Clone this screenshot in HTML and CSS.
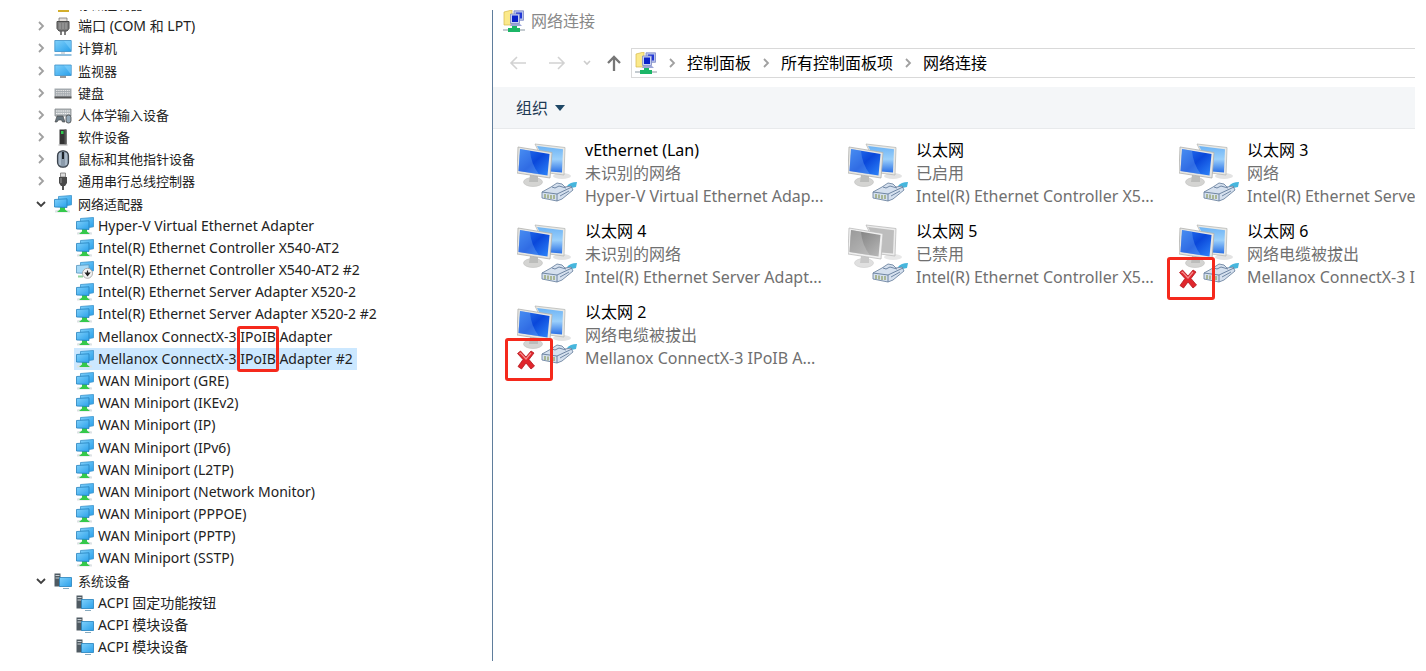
FILE: index.html
```html
<!DOCTYPE html>
<html lang="zh-CN">
<head>
    <meta charset="UTF-8">
    <meta name="viewport" content="width=device-width, initial-scale=1.0">
    <title>网络连接</title>
    <link rel="stylesheet" href="styles.css">
</head>
<body>
    <!-- Shared icons -->
    <svg class="sprite" aria-hidden="true">
        <defs>
            <linearGradient id="sky" x1="0" y1="0" x2="1" y2="1">
                <stop offset="0" stop-color="#7fd0fb"/>
                <stop offset="1" stop-color="#2aa0ea"/>
            </linearGradient>
            <linearGradient id="screen" x1="0" y1="0" x2="1" y2="1">
                <stop offset="0" stop-color="#2f7bf0"/>
                <stop offset="0.5" stop-color="#0a47da"/>
                <stop offset="1" stop-color="#2f86fa"/>
            </linearGradient>
            <linearGradient id="screen-back" x1="0" y1="0" x2="0" y2="1">
                <stop offset="0" stop-color="#6db3f4"/>
                <stop offset="0.5" stop-color="#9bd0fb"/>
                <stop offset="1" stop-color="#2a70e6"/>
            </linearGradient>
            <linearGradient id="gray-screen" x1="0" y1="0" x2="1" y2="1">
                <stop offset="0" stop-color="#777"/>
                <stop offset="1" stop-color="#b9b9b9"/>
            </linearGradient>
        </defs>
        <symbol id="right" viewBox="0 0 10 12"><path d="M3 2l4 4-4 4" fill="none" stroke="#a0a0a0" stroke-width="1.8"/></symbol>
        <symbol id="down" viewBox="0 0 10 12"><path d="M1 4l4 4 4-4" fill="none" stroke="#404040" stroke-width="1.8"/></symbol>
        <symbol id="net" viewBox="0 0 18 18">
            <path d="M1 15.5q7-2 15 0v2H1z" fill="#dde2e5"/>
            <path d="M6 12h5v2.500l3 2.500H3l3-2.500z" fill="#35c94b"/>
            <path d="M4.500 1.500l13-1v9.300l-4 .6h-9z" fill="url(#sky)" stroke="#3b93cb" stroke-width=".8"/>
            <path d="M.5 4.500l12.500-.7v8.700l-12.500-.5z" fill="url(#sky)" stroke="#2581bd" stroke-width=".8"/>
        </symbol>
        <symbol id="net-off" viewBox="0 0 18 18">
            <path d="M4.500 1.500l13-1v9.300l-4 .6h-9z" fill="url(#sky)" stroke="#3b93cb" stroke-width=".8"/>
            <path d="M.5 4.500l12.500-.7v8.700l-12.500-.5z" fill="#a6daf8" stroke="#5795bd" stroke-width=".8"/>
            <path d="M2 15.500h5" stroke="#8fd49a" stroke-width="2"/>
            <circle cx="11.500" cy="12.300" r="5" fill="#f3f3f3" stroke="#9b9b9b" stroke-width=".8"/>
            <path d="M11.500 9.500v3M9.500 12l2 2.500 2-2.500z" stroke="#222" stroke-width="1.200" fill="#222"/>
        </symbol>
        <symbol id="port" viewBox="0 0 18 18">
            <path d="M5 1h8v4H5z" fill="#e4e0dc" stroke="#777" stroke-width=".8"/>
            <path d="M3 4.500h12v7l-2 2.500H5l-2-2.500z" fill="#7d7d7d" stroke="#4b4b4b"/>
            <path d="M6 6v6M9 6v6M12 6v6" stroke="#a5a5a5"/>
            <path d="M7 14v4M11 14v4" stroke="#555" stroke-width="1.500"/>
        </symbol>
        <symbol id="computer" viewBox="0 0 18 18">
            <path d="M.8 1.500h16.400v11H.8z" fill="url(#sky)" stroke="#3c8fc7" stroke-width=".8"/>
            <path d="M10 2l7 9V2z" fill="#8ed7ff" opacity=".5"/>
            <path d="M7 13h4v2H7z" fill="#d5dade"/>
            <path d="M.5 16h17" stroke="#6eacd6" stroke-width="1.500"/>
        </symbol>
        <symbol id="monitor" viewBox="0 0 18 18">
            <path d="M.8 3h16.400v10.500H.8z" fill="url(#sky)" stroke="#3c8fc7" stroke-width=".8"/>
            <path d="M10 3.500l7 9v-9z" fill="#8ed7ff" opacity=".5"/>
            <path d="M6 15h6" stroke="#777" stroke-width="1.500"/>
        </symbol>
        <symbol id="keyboard" viewBox="0 0 18 18">
            <path d="M.5 4.500h17v9H.5z" fill="#a4aaaf"/>
            <path d="M.5 13.500h17" stroke="#555" stroke-width="2"/>
            <path d="M2 6.500h14M2 8.700h14M2 11h14" stroke="#e2e2e2" stroke-dasharray="1.500 .7"/>
        </symbol>
        <symbol id="hid" viewBox="0 0 18 18">
            <path d="M1 3h16v7H1z" fill="#b4babd" stroke="#858b8e" stroke-width=".8"/>
            <path d="M2 5h14M2 7.500h14" stroke="#f2f2f2" stroke-dasharray="1.500 .7"/>
            <path d="M1 16l2-6h6l2 6H8.500L7.500 14h-3L3 16z" fill="#66747d" stroke="#444" stroke-width=".6"/>
            <rect x="12" y="9" width="5" height="8" rx="2.300" fill="#95a9b8" stroke="#444" stroke-width=".8"/>
        </symbol>
        <symbol id="software" viewBox="0 0 18 18">
            <path d="M5.500 1.500h7v15h-7z" fill="#343434"/>
            <path d="M10.500 1.500h2v15h-2z" fill="#565656"/>
            <path d="M7 3h2.500v3H7z" fill="#30c94e"/>
            <path d="M4.500 17h9" stroke="#aaa"/>
        </symbol>
        <symbol id="mouse" viewBox="0 0 18 18">
            <rect x="3.500" y=".8" width="11" height="16.400" rx="5" fill="#8b9bab" stroke="#3c444d" stroke-width="1.200"/>
            <path d="M6 3v12M12 3v12" stroke="#bbc9d6" stroke-width="1.300"/>
            <path d="M9 2v7" stroke="#1d242b" stroke-width="2"/>
        </symbol>
        <symbol id="usb" viewBox="0 0 18 18">
            <path d="M6.500 1h5v4h-5z" fill="#ddd" stroke="#777" stroke-width=".8"/>
            <path d="M5 5h8v6l-2 3H7l-2-3z" fill="#4a4a4a"/>
            <path d="M7 6v5" stroke="#999"/>
            <path d="M9 14v4" stroke="#555" stroke-width="2"/>
        </symbol>
        <symbol id="system" viewBox="0 0 18 18">
            <path d="M.5 1.500h6v13h-6z" fill="#4f5a62"/>
            <path d="M1.500 3.500h4M1.500 6h4" stroke="#c9d0d4"/>
            <path d="M5.500 5.500h12v9h-12z" fill="url(#sky)" stroke="#2581bd" stroke-width=".8"/>
            <path d="M9 16.500h6" stroke="#86aabf"/>
        </symbol>
        <symbol id="card" viewBox="0 0 18 18">
            <path d="M2 7h14v6H2z" fill="#d8b43a"/>
            <path d="M1 12h16v3H1z" fill="#2a9440"/>
            <path d="M4 14h11v3H4z" fill="#d3ae2c"/>
        </symbol>
        <symbol id="folder-net" viewBox="0 0 22 22">
            <path d="M1 2l8-2v15H1z" fill="#fbe98a" stroke="#d5b94b" stroke-width=".7"/>
            <path d="M11 .8h9.500v9.500H11z" fill="#b9c4ec" stroke="#7c88c4" stroke-width=".8"/>
            <path d="M13 2.500h6v6h-6z" fill="#2338d6"/>
            <path d="M7.500 4h9v9.500h-9z" fill="#c7d0f0" stroke="#7c88c4" stroke-width=".8"/>
            <path d="M9 5.500h6v6.500H9z" fill="#0a22c9"/>
            <path d="M8 14h9l2 2H7z" fill="#9ca6d8"/>
            <path d="M0 19h22v2H0z" fill="#c4cbd0"/>
            <path d="M9 16h5v2h3v4H5v-4h4z" fill="#1cb667"/>
        </symbol>
        <symbol id="plug" viewBox="0 0 60 60">
            <path d="M50 43q3-4 10-4l-1 5q-4 0-7 3z" fill="#46b6dd"/>
            <path d="M25 49l9-5 6-4 5 1 3 3 6-1 2 4-11 9-5 2-15-3z" fill="#d5e0ee" stroke="#7187a3" stroke-width=".9"/>
            <path d="M25 49l15 2v7M40 51l15-7M35 44l3 1 4-2 7 2M43 53l9-5" fill="none" stroke="#637c9b" stroke-width=".9"/>
            <path d="M28 51v4M31 51.500v4M34 52v4M37 52v4" stroke="#91a068" stroke-width="1.300"/>
        </symbol>
        <symbol id="lan" viewBox="0 0 60 60">
            <ellipse cx="45" cy="33" rx="9" ry="3" fill="#e3e3e3"/>
            <path d="M18 1l30 3.500L47 32l-15-2z" fill="#e8e9e6" stroke="#b9bab7" stroke-width=".8"/>
            <path d="M20 3l26 3.200-1 23.300-12-1z" fill="url(#screen-back)"/>
            <ellipse cx="16" cy="39" rx="9.500" ry="4.500" fill="#d4d4d2" stroke="#c0c0be" stroke-width=".6"/>
            <path d="M13 32l8 1v6h-9z" fill="#bcbdbb"/>
            <path d="M1 4l34 5.500L33 35 0 30z" fill="#e6e6e3" stroke="#b0b0ad" stroke-width=".8"/>
            <path d="M3 6l29.500 5-2 21.500-29-4.500z" fill="url(#screen)"/>
            <path d="M3 6l10 1.700Q14 21 22 31.300L1.500 28z" fill="#79b3f5" opacity=".35"/>
            <use href="#plug"/>
        </symbol>
        <symbol id="lan-gray" viewBox="0 0 60 60">
            <ellipse cx="45" cy="33" rx="9" ry="3" fill="#e8e8e8"/>
            <path d="M18 1l30 3.500L47 32l-15-2z" fill="#ececec" stroke="#bbb" stroke-width=".8"/>
            <path d="M20 3l26 3.200-1 23.300-12-1z" fill="#bdbdbd"/>
            <ellipse cx="16" cy="39" rx="9.500" ry="4.500" fill="#e0e0e0" stroke="#ccc" stroke-width=".6"/>
            <path d="M13 32l8 1v6h-9z" fill="#c8c8c8"/>
            <path d="M1 4l34 5.500L33 35 0 30z" fill="#f0f0f0" stroke="#bbb" stroke-width=".8"/>
            <path d="M3 6l29.500 5-2 21.500-29-4.500z" fill="url(#gray-screen)"/>
            <path d="M3 6l10 1.700Q14 21 22 31.300L1.500 28z" fill="#ccc" opacity=".4"/>
            <use href="#plug"/>
        </symbol>
        <symbol id="cross" viewBox="0 0 20 20">
            <path d="M1.500 3.500L4.500 1 10 7l5-6 3 2-5 6.500 5.500 6.500-3.500 3-5-6-4.500 6L2 16.500 7 9.500z" fill="#e0262c" stroke="#b3181e" stroke-width=".8"/>
            <path d="M3.500 3.800l1-.8 5.500 6 5-6" fill="none" stroke="#f58c8e" stroke-width="1.200"/>
        </symbol>
    </svg>

    <div class="container">
        <!-- Device tree -->
        <nav class="devices">
            <ul class="tree">
                <li><svg class="arrow"><use href="#right"/></svg><svg class="icon"><use href="#card"/></svg>存储控制器</li>
                <li class="latin"><svg class="arrow"><use href="#right"/></svg><svg class="icon"><use href="#port"/></svg>端口 (COM 和 LPT)</li>
                <li><svg class="arrow"><use href="#right"/></svg><svg class="icon"><use href="#computer"/></svg>计算机</li>
                <li><svg class="arrow"><use href="#right"/></svg><svg class="icon"><use href="#monitor"/></svg>监视器</li>
                <li><svg class="arrow"><use href="#right"/></svg><svg class="icon"><use href="#keyboard"/></svg>键盘</li>
                <li><svg class="arrow"><use href="#right"/></svg><svg class="icon"><use href="#hid"/></svg>人体学输入设备</li>
                <li><svg class="arrow"><use href="#right"/></svg><svg class="icon"><use href="#software"/></svg>软件设备</li>
                <li><svg class="arrow"><use href="#right"/></svg><svg class="icon"><use href="#mouse"/></svg>鼠标和其他指针设备</li>
                <li><svg class="arrow"><use href="#right"/></svg><svg class="icon"><use href="#usb"/></svg>通用串行总线控制器</li>
                <li><svg class="arrow"><use href="#down"/></svg><svg class="icon"><use href="#net"/></svg>网络适配器</li>
                <li class="child"><svg class="icon"><use href="#net"/></svg><span>Hyper-V Virtual Ethernet Adapter</span></li>
                <li class="child"><svg class="icon"><use href="#net"/></svg><span>Intel(R) Ethernet Controller X540-AT2</span></li>
                <li class="child"><svg class="icon"><use href="#net-off"/></svg><span>Intel(R) Ethernet Controller X540-AT2 #2</span></li>
                <li class="child"><svg class="icon"><use href="#net"/></svg><span>Intel(R) Ethernet Server Adapter X520-2</span></li>
                <li class="child"><svg class="icon"><use href="#net"/></svg><span>Intel(R) Ethernet Server Adapter X520-2 #2</span></li>
                <li class="child"><svg class="icon"><use href="#net"/></svg><span>Mellanox ConnectX-3 <b class="marked">IPoIB</b> Adapter</span></li>
                <li class="child selected"><svg class="icon"><use href="#net"/></svg><span>Mellanox ConnectX-3 IPoIB Adapter #2</span></li>
                <li class="child"><svg class="icon"><use href="#net"/></svg><span>WAN Miniport (GRE)</span></li>
                <li class="child"><svg class="icon"><use href="#net"/></svg><span>WAN Miniport (IKEv2)</span></li>
                <li class="child"><svg class="icon"><use href="#net"/></svg><span>WAN Miniport (IP)</span></li>
                <li class="child"><svg class="icon"><use href="#net"/></svg><span>WAN Miniport (IPv6)</span></li>
                <li class="child"><svg class="icon"><use href="#net"/></svg><span>WAN Miniport (L2TP)</span></li>
                <li class="child"><svg class="icon"><use href="#net"/></svg><span>WAN Miniport (Network Monitor)</span></li>
                <li class="child"><svg class="icon"><use href="#net"/></svg><span>WAN Miniport (PPPOE)</span></li>
                <li class="child"><svg class="icon"><use href="#net"/></svg><span>WAN Miniport (PPTP)</span></li>
                <li class="child"><svg class="icon"><use href="#net"/></svg><span>WAN Miniport (SSTP)</span></li>
                <li><svg class="arrow"><use href="#down"/></svg><svg class="icon"><use href="#system"/></svg>系统设备</li>
                <li class="child"><svg class="icon"><use href="#system"/></svg><span>ACPI 固定功能按钮</span></li>
                <li class="child"><svg class="icon"><use href="#system"/></svg><span>ACPI 模块设备</span></li>
                <li class="child"><svg class="icon"><use href="#system"/></svg><span>ACPI 模块设备</span></li>
            </ul>
        </nav>

        <!-- Network connections window -->
        <main class="window">
            <header class="title"><svg class="folder"><use href="#folder-net"/></svg>网络连接</header>

            <div class="nav">
                <button aria-label="后退"><svg class="nav-icon" viewBox="0 0 18 18"><path d="M17 9H2M8 3L2 9l6 6" stroke="#d2d2d2"/></svg></button>
                <button aria-label="前进"><svg class="nav-icon" viewBox="0 0 18 18"><path d="M1 9h15M10 3l6 6-6 6" stroke="#d2d2d2"/></svg></button>
                <button aria-label="历史" class="recent"><svg class="nav-icon" viewBox="0 0 18 18"><path d="M6 7l3 3 3-3" stroke="#ccc"/></svg></button>
                <button aria-label="上移" class="up"><svg class="nav-icon" viewBox="0 0 18 18"><path d="M9 17V3M3 9l6-6 6 6" stroke="#777" stroke-width="2.300"/></svg></button>
                <div class="address">
                    <svg class="folder"><use href="#folder-net"/></svg>
                    <svg class="sep"><use href="#right"/></svg><a href="#">控制面板</a>
                    <svg class="sep"><use href="#right"/></svg><a href="#">所有控制面板项</a>
                    <svg class="sep"><use href="#right"/></svg><a href="#">网络连接</a>
                </div>
            </div>

            <div class="toolbar">
                <button class="organize">组织 <svg class="caret" viewBox="0 0 10 6"><path d="M0 0h10L5 6z" fill="#1e4766"/></svg></button>
            </div>

            <div class="connections">
                <div class="item">
                    <svg class="lan"><use href="#lan"/></svg>
                    <div class="info"><h2>vEthernet (Lan)</h2><p>未识别的网络</p><p>Hyper-V Virtual Ethernet Adap...</p></div>
                </div>
                <div class="item">
                    <svg class="lan"><use href="#lan"/></svg>
                    <div class="info"><h2>以太网</h2><p>已启用</p><p>Intel(R) Ethernet Controller X5...</p></div>
                </div>
                <div class="item">
                    <svg class="lan"><use href="#lan"/></svg>
                    <div class="info"><h2>以太网 3</h2><p>网络</p><p>Intel(R) Ethernet Server Adapt...</p></div>
                </div>
                <div class="item">
                    <svg class="lan"><use href="#lan"/></svg>
                    <div class="info"><h2>以太网 4</h2><p>未识别的网络</p><p>Intel(R) Ethernet Server Adapt...</p></div>
                </div>
                <div class="item">
                    <svg class="lan"><use href="#lan-gray"/></svg>
                    <div class="info"><h2>以太网 5</h2><p>已禁用</p><p>Intel(R) Ethernet Controller X5...</p></div>
                </div>
                <div class="item">
                    <svg class="lan"><use href="#lan"/></svg>
                    <div class="badge"><svg class="cross"><use href="#cross"/></svg></div>
                    <div class="info"><h2>以太网 6</h2><p>网络电缆被拔出</p><p>Mellanox ConnectX-3 IPoIB A...</p></div>
                </div>
                <div class="item">
                    <svg class="lan"><use href="#lan"/></svg>
                    <div class="badge"><svg class="cross"><use href="#cross"/></svg></div>
                    <div class="info"><h2>以太网 2</h2><p>网络电缆被拔出</p><p>Mellanox ConnectX-3 IPoIB A...</p></div>
                </div>
            </div>
        </main>
    </div>
</body>
</html>
```
FILE: styles.css
```css
* {
    margin: 0;
    padding: 0;
    box-sizing: border-box;
}

body {
    font-family: 'Noto Sans', 'Noto Sans CJK SC', sans-serif;
    background-color: #fff;
    color: #222;
    min-height: 100vh;
    display: flex;
    padding: 10px 11px 10px 0;
}

svg {
    display: block;
    flex: none;
}

.sprite {
    position: absolute;
    width: 0;
    height: 0;
}

.container {
    flex: 1;
    min-width: 0;
    display: grid;
    grid-template-columns: 492px minmax(0, 1fr);
    overflow: hidden;
}

/* Device tree */
.devices {
    display: flex;
}

.tree {
    flex: 1;
    display: flex;
    flex-direction: column;
    list-style: none;
    margin: -17px 0 3px;
    padding-left: 36px;
    font-size: 13px;
    line-height: 20px;
}

.tree li {
    flex: 1 0 20px;
    display: flex;
    align-items: center;
    white-space: nowrap;
}

.arrow {
    width: 10px;
    height: 12px;
    margin-right: 8px;
}

.icon {
    width: 18px;
    height: 18px;
    margin-right: 6px;
}

.tree .latin {
    font-size: 14px;
}

.tree .child {
    align-self: flex-start;
    padding: 0 4px 0 2px;
    margin-left: 38px;
    font-size: 14px;
}

.child .icon {
    margin-right: 4px;
}

.tree .selected {
    background-color: #cce8ff;
}

.marked {
    position: relative;
    font-weight: normal;
}

.marked::after {
    content: '';
    box-sizing: border-box;
    position: absolute;
    left: -3px;
    right: -3px;
    top: -1px;
    height: 46px;
    border: 3px solid #f5291c;
    border-radius: 3px;
}

/* Window */
.window {
    border-left: 1px solid #5f7d9c;
    font-size: 16px;
    line-height: 24px;
    overflow: hidden;
}

.title {
    display: flex;
    align-items: center;
    gap: 6px;
    height: 22px;
    padding-left: 10px;
    color: #888;
}

.folder {
    width: 22px;
    height: 22px;
}

.nav {
    display: flex;
    align-items: center;
    margin: 16px 0 9px;
    padding-left: 16px;
}

button {
    font: inherit;
    background: none;
    border: none;
    cursor: pointer;
}

.nav button {
    margin-right: 21px;
}

.nav .recent {
    margin: 0 9px 0 -9px;
}

.nav .up {
    margin-right: 8px;
}

.nav-icon {
    width: 18px;
    height: 18px;
    fill: none;
    stroke-width: 1.6;
}

.address {
    flex: 1;
    display: flex;
    align-items: center;
    height: 30px;
    padding-left: 3px;
    border: 1px solid #d9d9d9;
    border-right: none;
    white-space: nowrap;
}

.address a {
    color: #000;
    text-decoration: none;
}

.sep {
    width: 10px;
    height: 12px;
    margin: 0 10px;
}

.toolbar {
    height: 42px;
    display: flex;
    align-items: center;
    padding-left: 23px;
    background-color: #f4f6f8;
    border-bottom: 1px solid #e8eaec;
}

.organize {
    display: flex;
    align-items: center;
    gap: 7px;
    color: #1e3954;
}

.caret {
    width: 10px;
    height: 6px;
}

.connections {
    display: grid;
    grid-template-columns: repeat(3, 331px);
    row-gap: 12px;
    padding: 10px 0 0 24px;
}

.item {
    position: relative;
    display: flex;
    gap: 8px;
    white-space: nowrap;
}

.lan {
    width: 60px;
    height: 60px;
    margin-top: 4px;
}

.info {
    line-height: 23px;
}

.info h2 {
    font-size: 16px;
    font-weight: normal;
    color: #000;
}

.info p {
    color: #707070;
}

/* Unplugged cable marker */
.badge {
    position: absolute;
    left: -12px;
    top: 37px;
    width: 48px;
    height: 43px;
    display: flex;
    align-items: center;
    justify-content: center;
    padding-right: 6px;
    border: 3px solid #f5291c;
    border-radius: 3px;
}

.cross {
    width: 20px;
    height: 20px;
}
```
